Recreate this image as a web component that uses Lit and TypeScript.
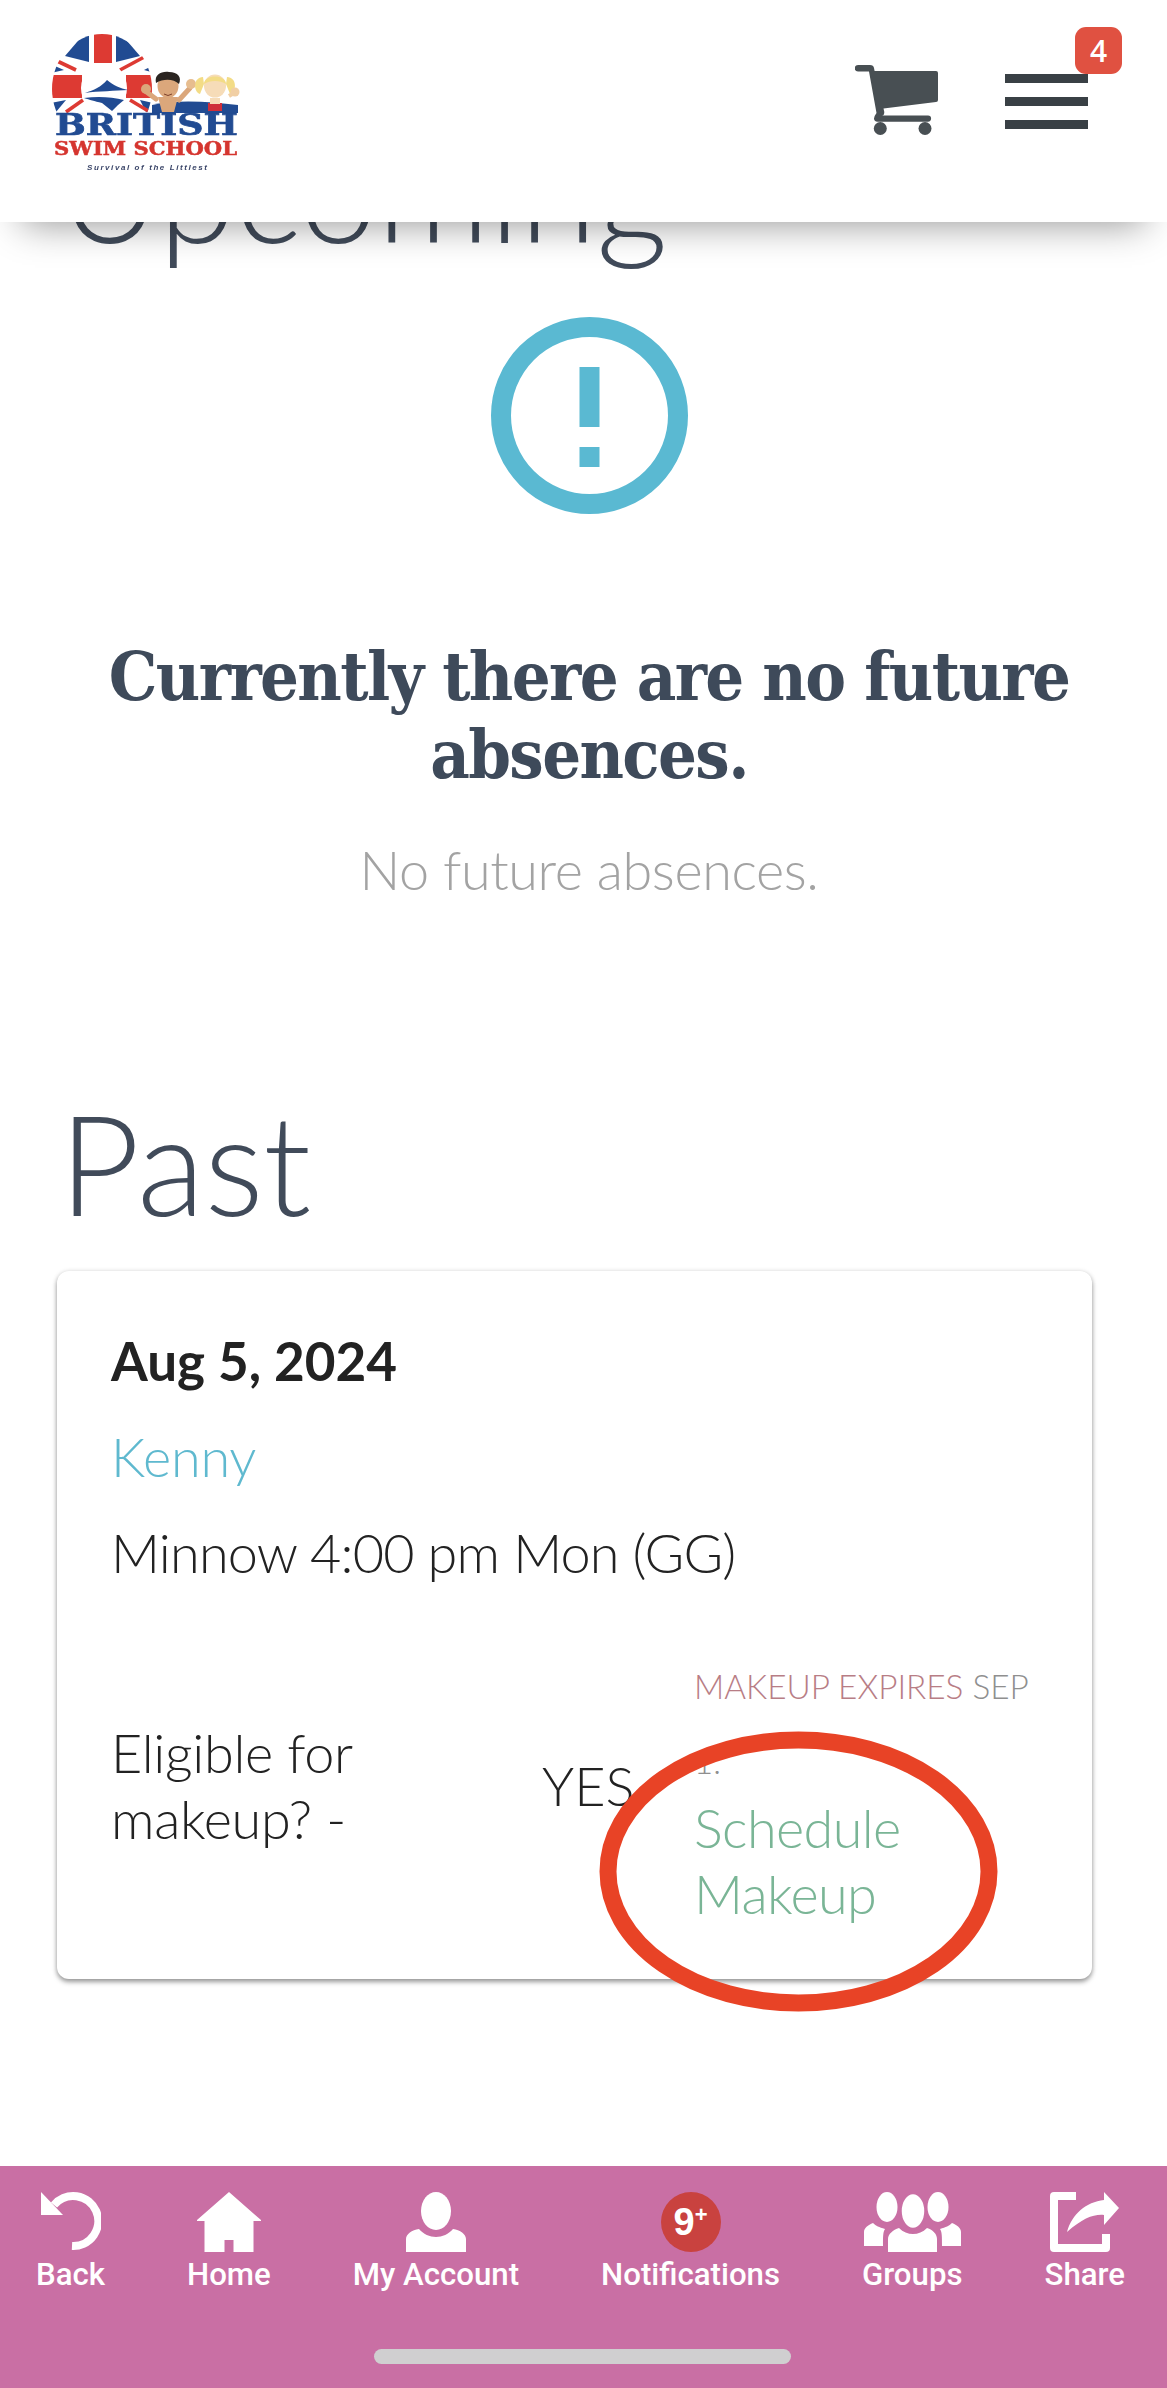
import { LitElement, html, css, svg } from "lit";
import { customElement } from "lit/decorators.js";

const logo = svg`
<svg class="logo" viewBox="0 0 210 160" width="210" height="160" aria-label="British Swim School">
  <defs><clipPath id="buoy"><ellipse cx="62" cy="69" rx="50" ry="55"/></clipPath></defs>
  <g clip-path="url(#buoy)">
    <g fill="#214b92">
      <path d="M25 36 L49 8 L49 42 Z"/><path d="M76 8 L100 36 L76 42 Z"/>
      <path d="M6 54 L10 44 L24 50 Z"/><path d="M104 50 L116 44 L118 54 Z"/>
      <path d="M6 84 L26 80 L16 92 L6 94 Z"/><path d="M100 80 L118 84 L118 94 L106 92 Z"/>
    </g>
    <g fill="#dd3a33">
      <path d="M54 5 H72 V43 H54 Z"/>
      <path d="M5 55 H42 V78 H5 Z"/>
      <path d="M86 55 H120 V78 H86 Z"/>
    </g>
    <g stroke="#dd3a33" stroke-width="3.6" fill="none">
      <path d="M15 40 L36 50"/><path d="M80 50 L108 35"/>
      <path d="M26 92 L43 80"/><path d="M90 80 L110 92"/>
    </g>
    <ellipse cx="64" cy="68" rx="23" ry="25" fill="#fff"/>
  </g>
  <path fill="#214b92" d="M67 60 C61 67 54 70 45 73 C58 71 76 71 88 70 C80 68 74 66 67 60 Z"/>
  <path fill="#214b92" d="M44 78 C58 76 72 77 84 80 L78 85 L72 91 L62 83 C54 81 50 80 44 78 Z"/>
  <path fill="#214b92" d="M112 85 C140 79 170 82 198 85 L198 93 L112 93 Z"/>
  <path d="M116 79 L104 70" stroke="#dba77b" stroke-width="5" stroke-linecap="round"/>
  <path d="M139 80 L150 68" stroke="#dba77b" stroke-width="5" stroke-linecap="round"/>
  <circle cx="106" cy="69" r="5" fill="#dba77b"/><circle cx="151" cy="64" r="5" fill="#e7bd8f"/>
  <path d="M118 77 H138 L134 92 H122 Z" fill="#dba77b"/>
  <ellipse cx="128" cy="66" rx="10.5" ry="12" fill="#dba77b"/>
  <path d="M116 63 C114 54 122 51 129 52 C138 52 142 57 139 64 C134 59 124 58 116 63 Z" fill="#2b2521"/>
  <path d="M124 74 Q128 77 132 74" stroke="#7d4029" stroke-width="1" fill="none"/>
  <path d="M163 57 C153 57 153 72 160 74 L164 64 Z" fill="#f3dc86"/>
  <path d="M187 57 C197 57 197 72 190 74 L186 64 Z" fill="#f3dc86"/>
  <circle cx="195" cy="72" r="4.5" fill="#f1cfa4"/>
  <path d="M189 76 L194 73" stroke="#f1cfa4" stroke-width="4"/>
  <ellipse cx="175" cy="66" rx="11" ry="11.5" fill="#f6dcb8"/>
  <path d="M164 64 C164 54 186 54 186 64 C180 60 170 60 164 64 Z" fill="#f3dc86"/>
  <path d="M168 83 H182 V91 H168 Z" fill="#cf2f3a"/>
  <path d="M170 78 H180 V84 H170 Z" fill="#f6dcb8"/>
  <text x="15" y="115" class="brand" font-size="30" textLength="183" lengthAdjust="spacingAndGlyphs" fill="#214b92" stroke="#214b92" stroke-width="0.7">BRITISH</text>
  <text x="14" y="135" class="brand" font-size="18" textLength="183" lengthAdjust="spacingAndGlyphs" fill="#d5352f" stroke="#d5352f" stroke-width="0.5">SWIM SCHOOL</text>
  <text x="47" y="150" class="tag" font-size="8" textLength="120" fill="#3a4568">Survival of the Littlest</text>
</svg>`;

const cart = svg`
<svg class="cart" viewBox="0 0 83 70" width="83" height="70">
  <path fill="#484f53" d="M3 0 H15 Q18.5 0 19 3 L19.6 6 H81 Q83 6 83 8 V35 Q83 37 81 37 L28.5 43.5 L29.3 47 Q29.3 50.5 27 50.5 H73 A3.1 3.1 0 0 1 73 56.7 H22.5 Q19 56.5 19 53.5 Q19.5 50.5 21.5 48 L14 6.5 H3 A3.2 3.2 0 0 1 3 0 Z"/>
  <circle cx="25.3" cy="63.5" r="6.5" fill="#484f53"/><circle cx="70" cy="63.5" r="6.5" fill="#484f53"/>
</svg>`;

const backIcon = svg`
<svg viewBox="0 0 60 60" width="60" height="60">
  <path d="M0 0 V23 H22 Z" fill="#fff"/>
  <path d="M13 13 A25 25 0 1 1 31 54" fill="none" stroke="#fff" stroke-width="8"/>
</svg>`;
const homeIcon = svg`
<svg viewBox="0 0 64 60" width="64" height="60">
  <path fill="#fff" fill-rule="evenodd" d="M32 0 L64 28 V29 H56.5 V60 H36.5 V48 H27.5 V60 H7.5 V29 H0 V28 Z"/>
</svg>`;
const accountIcon = svg`
<svg viewBox="0 0 60 60" width="60" height="60" fill="#fff">
  <ellipse cx="30" cy="19" rx="15" ry="19"/>
  <path d="M0 60 V47 C0 42 6 38 13 37 C17 42 24 45 30 45 C36 45 43 42 47 37 C54 38 60 42 60 47 V60 Z"/>
</svg>`;
const groupsIcon = svg`
<svg viewBox="0 0 97 60" width="97" height="60" fill="#fff">
  <ellipse cx="23" cy="15" rx="10.5" ry="15"/><ellipse cx="74" cy="15" rx="10.5" ry="15"/>
  <path d="M0 54 V40 C0 36 4 33 9 31 C12 34 15 35 21 37 C19 40 19 44 19 54 Z"/>
  <path d="M97 54 V40 C97 36 93 33 88 31 C85 34 82 35 76 37 C78 40 78 44 78 54 Z"/>
  <ellipse cx="49" cy="19" rx="12.5" ry="18" stroke="#c96fa4" stroke-width="2.5"/>
  <path d="M24 60 V47 C24 42 29 38 35 36 C39 40 44 42 49 42 C54 42 59 40 63 36 C69 38 73 42 73 47 V60 Z"/>
</svg>`;
const shareIcon = svg`
<svg viewBox="0 0 69 60" width="69" height="60" fill="#fff">
  <path d="M26 0 H4 Q0 0 0 4 V56 Q0 60 4 60 H56 Q60 60 60 56 V42 H52 V52 H8 V8 H26 Z"/>
  <path d="M54 0 L69 16 L54 33 V23 C44 22 33 26 17 40 C22 22 36 10 54 8 Z"/>
</svg>`;

@customElement("app-root")
export class AppRoot extends LitElement {
  static styles = css`
    :host {
      display: flex;
      flex-direction: column;
      position: relative;
      width: 1167px;
      height: 2388px;
      overflow: hidden;
      background: #fff;
      font-family: Lato, "Liberation Sans", sans-serif;
      font-weight: 300;
    }
    .header {
      position: absolute;
      inset: 0 0 auto 0;
      height: 222px;
      background: #fff;
      box-shadow: 0 24px 36px -22px rgba(0, 0, 0, 0.42);
      z-index: 2;
    }
    .logo { position: absolute; left: 40px; top: 20px; filter: blur(0.35px); }
    .brand { font-family: "DejaVu Serif", serif; font-weight: 700; }
    .tag { font-family: "Liberation Sans", sans-serif; font-weight: 700; font-style: italic; }
    .cart { position: absolute; left: 855px; top: 65px; }
    .burger {
      position: absolute;
      left: 1005px;
      top: 74px;
      width: 83px;
      display: flex;
      flex-direction: column;
      gap: 14px;
    }
    .burger i { display: block; height: 9px; background: #394045; }
    .badge {
      position: absolute;
      left: 1075px;
      top: 27px;
      width: 47px;
      height: 47px;
      border-radius: 11px;
      background: #e05141;
      color: #fff;
      font: 600 30px/47px "Open Sans", sans-serif;
      text-align: center;
    }
    .main {
      flex: 1;
      min-height: 0;
      display: flex;
      flex-direction: column;
      padding: 108px 0 0;
    }
    .title {
      margin: 0;
      padding-left: 59px;
      font-size: 140px;
      letter-spacing: -0.5px;
      line-height: 162px;
      font-weight: 300;
      color: #414b5a;
    }
    .alert { display: flex; flex-direction: column; align-items: center; margin-top: 46.5px; }
    .alert-icon { width: 197px; height: 197px; margin-left: 12px; }
    .alert h3 {
      margin: 123.5px 0 0 11px;
      width: 1010px;
      text-align: center;
      font-family: "DejaVu Serif Condensed", "DejaVu Serif", serif;
      font-stretch: condensed;
      font-size: 68px;
      letter-spacing: -1.6px;
      line-height: 78px;
      font-weight: 700;
      color: #3e4a5a;
    }
    .alert p {
      margin: 46px 0 0 11px;
      font-size: 54px;
      letter-spacing: -0.4px;
      line-height: 62px;
      color: #a3a3a3;
    }
    .past { margin-top: 180px; }
    .card {
      box-sizing: border-box;
      margin: 28px 75px 0 57px;
      height: 708px;
      padding: 59px 41px 0 54px;
      background: #fff;
      border-radius: 12px;
      box-shadow: 0 3px 5px rgba(0, 0, 0, 0.38), 0 0 5px rgba(0, 0, 0, 0.1);
      color: #222;
      font-size: 54px;
    }
    .date { font-weight: 700; line-height: 62px; font-size: 53px; color: #222; }
    .kid { color: #5fb9cf; line-height: 62px; margin-top: 34px; letter-spacing: -0.2px; }
    .cls { line-height: 62px; margin-top: 34px; letter-spacing: -0.8px; }
    .row {
      display: grid;
      grid-template-columns: 431px 152px 1fr;
      align-items: center;
      margin-top: 60px;
    }
    .label { line-height: 66px; width: 300px; letter-spacing: -0.3px; }
    .right { display: flex; flex-direction: column; margin-top: 24px; }
    .expires { font-size: 33.3px; line-height: 37px; color: #8f8f8f; white-space: nowrap; }
    .expires b { font-weight: 300; color: #b87d85; }
    .expires-date { font-size: 33px; line-height: 37px; color: #8f8f8f; margin-top: 38px; }
    .action { line-height: 66px; color: #7ab596; margin-top: 15px; width: 300px; letter-spacing: -0.6px; }
    .ring { position: absolute; left: 590px; top: 1722px; z-index: 1; }
    .footer {
      height: 222px;
      background: #c96fa4;
      display: flex;
      flex-direction: column;
      font-family: Roboto, sans-serif;
      font-weight: 500;
      color: #fff;
    }
    .tabs { display: flex; gap: 82px; padding: 26px 0 0 36px; }
    .tab { display: flex; flex-direction: column; align-items: center; font-size: 31.2px; line-height: 34px; gap: 6px; white-space: nowrap; }
    .tab svg, .bubble { display: block; height: 60px; }
    .bubble {
      width: 60px;
      border-radius: 50%;
      background: #c9423f;
      display: flex;
      align-items: center;
      justify-content: center;
      font: 700 38px/60px "Liberation Sans", sans-serif;
    }
    .bubble sup { font-size: 22px; font-weight: 700; line-height: 0; position: relative; top: -7px; vertical-align: baseline; }
    .indicator {
      width: 417px;
      height: 15px;
      margin: 57px 0 0 374px;
      border-radius: 8px;
      background: #d0cfd0;
    }
  `;

  render() {
    const tabs = [
      { label: "Back", icon: backIcon },
      { label: "Home", icon: homeIcon },
      { label: "My Account", icon: accountIcon },
      { label: "Notifications", icon: html`<div class="bubble">9<sup>+</sup></div>` },
      { label: "Groups", icon: groupsIcon },
      { label: "Share", icon: shareIcon },
    ];
    return html`
      <header class="header">
        ${logo} ${cart}
        <div class="burger"><i></i><i></i><i></i></div>
        <div class="badge">4</div>
      </header>
      <main class="main">
        <h2 class="title">Upcoming</h2>
        <section class="alert">
          <svg class="alert-icon" viewBox="0 0 197 197">
            <circle cx="98.5" cy="98.5" r="88.5" fill="none" stroke="#5ab9d2" stroke-width="20"/>
            <rect x="88.5" y="50" width="20" height="60" fill="#5ab9d2"/>
            <rect x="88.5" y="130" width="20" height="20" fill="#5ab9d2"/>
          </svg>
          <h3>Currently there are no future absences.</h3>
          <p>No future absences.</p>
        </section>
        <h2 class="title past">Past</h2>
        <article class="card">
          <div class="date">Aug 5, 2024</div>
          <div class="kid">Kenny</div>
          <div class="cls">Minnow 4:00 pm Mon (GG)</div>
          <div class="row">
            <div class="label">Eligible for makeup? -</div>
            <div>YES</div>
            <div class="right">
              <div class="expires"><b>MAKEUP EXPIRES</b> SEP</div>
              <div class="expires-date">1.</div>
              <div class="action">Schedule Makeup</div>
            </div>
          </div>
        </article>
      </main>
      <svg class="ring" width="417" height="299" viewBox="0 0 417 299">
        <ellipse cx="208.5" cy="149.5" rx="190.5" ry="131.5" fill="none" stroke="#e84326" stroke-width="17"/>
      </svg>
      <footer class="footer">
        <nav class="tabs">
          ${tabs.map((t) => html`<div class="tab">${t.icon}<span>${t.label}</span></div>`)}
        </nav>
        <div class="indicator"></div>
      </footer>
    `;
  }
}
